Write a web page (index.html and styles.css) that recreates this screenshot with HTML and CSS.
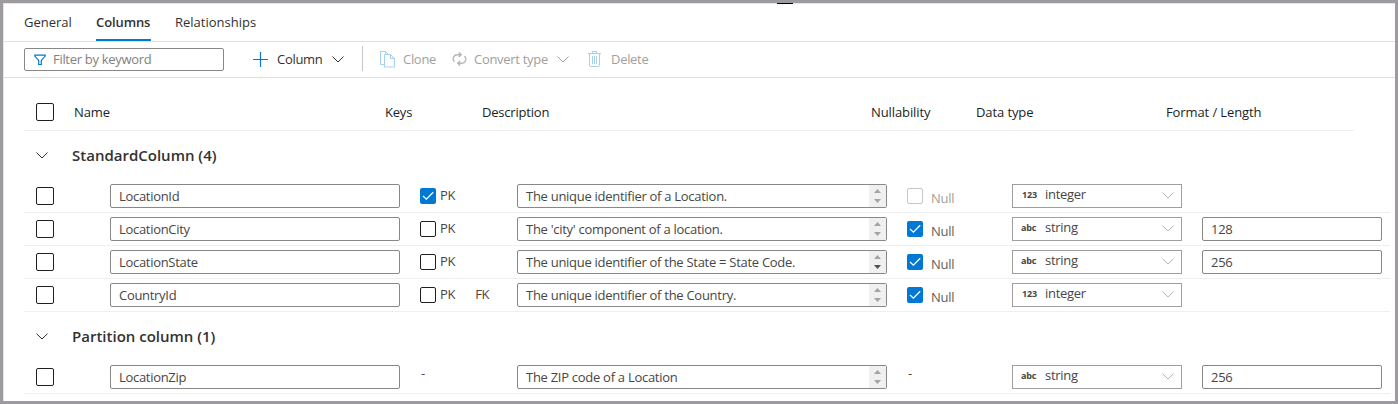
FILE: index.html
```html
<!DOCTYPE html>
<html lang="en">
<head>
<meta charset="utf-8">
<title>Columns</title>
<link rel="stylesheet" href="styles.css">
</head>
<body>
<svg class="defs" width="0" height="0">
  <symbol id="chevron" viewBox="0 0 12 7"><path d="M.5.6 6 6 11.5.6" fill="none" stroke="currentColor"/></symbol>
  <symbol id="check" viewBox="0 0 16 16"><path d="M3 8l3.4 3.2L13.2 4.300" fill="none" stroke="#fff" stroke-width="1.25"/></symbol>
  <symbol id="spin" viewBox="0 0 17 22"><path class="spin-up" d="M5 8 8.500 4 12 8z"/><path class="spin-down" d="M5 14h7l-3.500 4z"/></symbol>
</svg>
<div class="window">
  <i class="handle"></i>
  <nav class="tabs">
    <a class="tab">General</a><a class="tab active">Columns</a><a class="tab rel">Relationships</a>
  </nav>
  <div class="toolbar">
    <div class="search">
      <svg width="12" height="12" viewBox="0 0 12 12"><path d="M.8 1.100h10.400v1L7.300 6.400v4.100H4.700V6.400L.8 2.100z" fill="none" stroke="#0078d4" stroke-width="1.200"/></svg>
      <span>Filter by keyword</span>
    </div>
    <div class="cmd add">
      <svg width="15" height="15" viewBox="0 0 15 15"><path d="M7.500 0v15M0 7.500h15" stroke="#0078d4" stroke-width="1.200"/></svg>
      <span>Column</span>
      <svg class="chev" width="12" height="7"><use href="#chevron"/></svg>
    </div>
    <i class="divider"></i>
    <div class="cmd clone">
      <svg width="15" height="17" viewBox="0 0 15 17"><path d="M4.500 13.500h-4V.5h5L8.500 3.500M5.500.5v3M4.500 3.500h6l4 4v8.500h-10zM10.500 3.500v4h4" fill="none" stroke="#a6cff0"/></svg>
      <span>Clone</span>
    </div>
    <div class="cmd convert">
      <svg width="15" height="14" viewBox="0 0 15 14"><path d="M2.600 9.700C1 8.600.8 6.200 1.800 4.600 2.600 3.200 4 2.700 5.500 2.700h3.700M6.800.5 9.200 2.700 6.800 5M12.400 4.200c1.500 1.100 1.800 3.500.8 5.100-.8 1.400-2.200 1.900-3.700 1.900H5.800M8.200 9 5.800 11.200l2.400 2.300" fill="none" stroke="#b9b7b5" stroke-width="1.500"/></svg>
      <span>Convert type</span>
      <svg class="chev" width="12" height="7"><use href="#chevron"/></svg>
    </div>
    <div class="cmd delete">
      <svg width="13" height="16" viewBox="0 0 13 16"><path d="M0 2.500h13M4.500 2.500v-2h4v2M1.500 2.500v12q0 1 1 1h8q1 0 1-1v-12M4.500 5v8M6.500 5v8M8.500 5v8" fill="none" stroke="#a6cff0"/></svg>
      <span>Delete</span>
    </div>
  </div>
  <div class="table">
    <div class="grid head">
      <i class="box"></i><span class="h-name">Name</span><span class="h-keys">Keys</span><span class="h-desc">Description</span><span class="h-null">Nullability</span><span class="h-type">Data type</span><span class="h-fmt">Format / Length</span>
    </div>
    <div class="group"><svg width="12" height="7"><use href="#chevron"/></svg><span>StandardColumn (4)</span></div>
    <div class="row">
      <i class="box"></i><div class="field name">LocationId</div>
      <div class="keys"><span class="small on"><svg><use href="#check"/></svg></span><span class="pk">PK</span></div>
      <div class="field desc"><span>The unique identifier of a Location.</span><svg class="spin"><use href="#spin"/></svg></div>
      <div class="null off"><span class="small"></span><span>Null</span></div>
      <div class="select"><b>123</b><span>integer</span><svg width="12" height="7"><use href="#chevron"/></svg></div>
    </div>
    <div class="row">
      <i class="box"></i><div class="field name">LocationCity</div>
      <div class="keys"><span class="small"></span><span class="pk">PK</span></div>
      <div class="field desc"><span>The 'city' component of a location.</span><svg class="spin"><use href="#spin"/></svg></div>
      <div class="null"><span class="small on"><svg><use href="#check"/></svg></span><span>Null</span></div>
      <div class="select"><b class="abc">abc</b><span>string</span><svg width="12" height="7"><use href="#chevron"/></svg></div>
      <div class="field fmt">128</div>
    </div>
    <div class="row">
      <i class="box"></i><div class="field name">LocationState</div>
      <div class="keys"><span class="small"></span><span class="pk">PK</span></div>
      <div class="field desc"><span>The unique identifier of the State = State Code.</span><svg class="spin more"><use href="#spin"/></svg></div>
      <div class="null"><span class="small on"><svg><use href="#check"/></svg></span><span>Null</span></div>
      <div class="select"><b class="abc">abc</b><span>string</span><svg width="12" height="7"><use href="#chevron"/></svg></div>
      <div class="field fmt">256</div>
    </div>
    <div class="row">
      <i class="box"></i><div class="field name">CountryId</div>
      <div class="keys"><span class="small"></span><span class="pk">PK</span><span class="fk">FK</span></div>
      <div class="field desc"><span>The unique identifier of the Country.</span><svg class="spin"><use href="#spin"/></svg></div>
      <div class="null"><span class="small on"><svg><use href="#check"/></svg></span><span>Null</span></div>
      <div class="select"><b>123</b><span>integer</span><svg width="12" height="7"><use href="#chevron"/></svg></div>
    </div>
    <div class="group partition"><svg width="12" height="7"><use href="#chevron"/></svg><span>Partition column (1)</span></div>
    <div class="row">
      <i class="box"></i><div class="field name">LocationZip</div>
      <div class="keys"><span class="dash">-</span></div>
      <div class="field desc"><span>The ZIP code of a Location</span><svg class="spin"><use href="#spin"/></svg></div>
      <div class="null"><span class="dash">-</span></div>
      <div class="select"><b class="abc">abc</b><span>string</span><svg width="12" height="7"><use href="#chevron"/></svg></div>
      <div class="field fmt">256</div>
    </div>
  </div>
</div>
</body>
</html>
```
FILE: styles.css
```css
* { box-sizing: border-box; }
body { margin: 0; font: 13px/18px "Open Sans", "Noto Sans", sans-serif; letter-spacing: -0.3px; color: #323130; }
.defs { position: absolute; }
svg { flex: none; display: block; }
.window { position: relative; width: 1398px; height: 404px; border: 3px solid #9d9ba0; background: #fff; overflow: hidden; box-shadow: inset 1px 1px #e4e4e5; }
.handle { position: absolute; left: 774px; top: 0; width: 16px; height: 1px; background: #000; }
.tabs { display: flex; height: 39px; margin-left: 1px; padding-left: 20px; border-bottom: 1px solid #dfdfdf; }
.tab { height: 38px; padding-top: 10px; margin-right: 24px; width: 48px; white-space: nowrap; letter-spacing: 0; }
.tab.active { width: 55px; font-weight: 600; letter-spacing: -0.1px; border-bottom: 2px solid #0078d4; }
.toolbar { display: flex; height: 36px; margin-left: 1px; padding-left: 20px; border-bottom: 1px solid #dfdfdf; }
.search { display: flex; align-items: center; gap: 7px; width: 200px; height: 23px; margin-top: 6px; padding-left: 9px; border: 1px solid #8a8886; border-radius: 2px; color: #83817f; }
.search span { padding-bottom: 2px; }
.cmd { display: flex; align-items: center; height: 34px; white-space: nowrap; color: #a19f9d; }
.cmd span { display: block; }
.add { margin-left: 29px; width: 126px; color: #323130; }
.add span { width: 46px; margin: 0 9px; }
.divider { width: 1px; height: 25px; margin-top: 4px; margin-left: -17px; background: #c8c6c4; }
.clone { margin-left: 17px; width: 72px; gap: 8px; }
.convert { width: 136px; }
.convert span { width: 75px; margin: 0 8px 0 7px; }
.delete { gap: 10px; }
.table { margin-left: 21px; }
.head { display: grid; grid-template-columns: 50px 311px 97px 389px 105px 190px 188px; align-items: center; width: 1330px; height: 53px; padding-top: 16px; border-bottom: 1px solid #efefef; color: #201f1e; letter-spacing: -0.1px; }
.h-keys, .h-desc { letter-spacing: -0.2px; }
.head .box { margin-left: 12px; }
.box { display: block; width: 18px; height: 18px; border: 1px solid #201f1e; border-radius: 2px; }
.group { display: flex; align-items: center; height: 49px; padding-left: 12px; gap: 24px; font-size: 15px; font-weight: 600; letter-spacing: 0; }
.group span { padding-bottom: 2px; }
.row { display: grid; grid-template-columns: 74px 310px 97px 390px 105px 190px 180px; align-items: start; width: 1366px; height: 33px; border-bottom: 1px solid #efefef; padding-left: 12px; color: #484644; }
.row .box { margin-top: 7px; }
.field { height: 24px; margin-top: 4px; padding-left: 8px; line-height: 23px; border: 1px solid #8a8886; border-radius: 2px; white-space: nowrap; }
.name { width: 290px; }
.desc { width: 370px; display: flex; justify-content: space-between; letter-spacing: -0.28px; }
.spin { width: 17px; height: 22px; background: #f0f0f0; fill: #a3a3a3; }
.more { --down: #505050; }
.spin-down { fill: var(--down, #a3a3a3); }
.keys, .null { display: flex; }
.small { width: 16px; height: 16px; margin-top: 8px; border: 1px solid #201f1e; border-radius: 2px; }
.small.on { border: 0; background: #0078d4; }
.small svg { width: 16px; height: 16px; }
.pk, .fk { margin: 6px 0 0 4px; }
.fk { margin-left: 20px; }
.null > span + span { margin: 9px 0 0 8px; color: #605e5c; }
.null.off .small { border-color: #c8c6c4; }
.null.off > span + span { color: #a19f9d; }
.dash { margin: 3px 0 0 1px; }
.select { display: flex; align-items: flex-start; width: 170px; height: 24px; margin-top: 4px; padding-left: 9px; border: 1px solid #a19f9d; }
.select b { width: 23px; font-size: 9px; font-weight: 700; letter-spacing: -0.2px; line-height: 20px; }
.select .abc { margin-left: -1px; width: 24px; }
.select span { width: 117px; line-height: 19px; }
.select svg { margin-top: 7px; color: #b5b3b1; }
.fmt { width: 180px; }
```
